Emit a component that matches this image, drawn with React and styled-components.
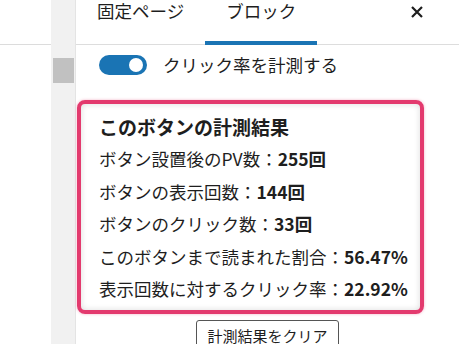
import React from "react";
import styled, { createGlobalStyle } from "styled-components";

const Global = createGlobalStyle`
  html, body { margin: 0; padding: 0; background: #fff; }
  body { font-family: "Noto Sans CJK JP", "Noto Sans", sans-serif; color: #1e1e1e; }
  * { box-sizing: border-box; }
`;

const Page = styled.div`
  display: flex;
  width: 459px;
  height: 344px;
  overflow: hidden;
`;

const LeftPane = styled.div`
  width: 51px;
  flex: none;
`;

const LeftHeader = styled.div`
  height: 45px;
  border-bottom: 1px solid #dcdcdc;
`;

const ScrollTrack = styled.div`
  width: 25px;
  flex: none;
  background: #f1f1f1;
  border-right: 1px solid #e4e4e4;
  padding: 58px 2px 0 2px;
`;

const ScrollThumb = styled.div`
  width: 21px;
  height: 25px;
  background: #c1c1c1;
`;

const Sidebar = styled.div`
  flex: 1;
  display: flex;
  flex-direction: column;
  min-width: 0;
  & > * { flex: none; }
`;

const TabBar = styled.div`
  display: flex;
  align-items: stretch;
  height: 45px;
  border-bottom: 1px solid #dddddd;
`;

const Tab = styled.div`
  padding: 0 21px;
  font-size: 17.5px;
  line-height: 21px;
  color: #1e1e1e;
  border-bottom: 4px solid ${(p) => (p.$active ? "#1a74b4" : "transparent")};
  margin-bottom: -1px;
  display: flex;
  align-items: flex-start;
`;

const Spacer = styled.div`
  flex: 1;
`;

const CloseButton = styled.div`
  width: 12px;
  margin: 6px 36px 0 0;
  height: 12px;
  display: flex;
`;

const Content = styled.div`
  display: flex;
  flex-direction: column;
  & > * { flex: none; }
`;

const ToggleRow = styled.div`
  display: flex;
  gap: 16px;
  padding: 9px 0 0 23px;
  height: 55px;
  align-items: flex-start;
`;

const Track = styled.div`
  width: 48px;
  height: 20px;
  border-radius: 10px;
  background: #1a74b4;
  display: flex;
  align-items: center;
  justify-content: flex-end;
  padding-right: 4px;
  margin-top: 1px;
`;

const Knob = styled.div`
  width: 14px;
  height: 14px;
  border-radius: 50%;
  background: #fff;
`;

const ToggleLabel = styled.div`
  font-size: 17.5px;
  line-height: 22px;
`;

const Card = styled.div`
  margin-left: 1px;
  width: 347px;
  border: 4px solid #e33a6e;
  border-radius: 8px;
  box-shadow: inset 0 0 6px rgba(0, 0, 0, 0.14), 0 0 3px rgba(227, 58, 110, 0.4);
  padding: 7px 10px 4px 18px;
`;

const CardTitle = styled.div`
  font-size: 19px;
  font-weight: 700;
  line-height: 32px;
`;

const StatLine = styled.div`
  font-size: 17.5px;
  line-height: 32.5px;
  white-space: nowrap;
`;

const Value = styled.b`
  font-weight: 700;
`;

const ButtonRow = styled.div`
  display: flex;
  justify-content: center;
  padding: 6px 0 0 0;
`;

const ClearButton = styled.button`
  font-family: inherit;
  font-size: 15px;
  line-height: 28px;
  height: 32px;
  padding: 1px 10px 0;
  background: #fff;
  color: #1e1e1e;
  border: 1px solid #555;
  border-radius: 3px;
`;

const stats = [
  ["ボタン設置後のPV数：", "255回"],
  ["ボタンの表示回数：", "144回"],
  ["ボタンのクリック数：", "33回"],
  ["このボタンまで読まれた割合：", "56.47%"],
  ["表示回数に対するクリック率：", "22.92%"],
];

export default function App() {
  return (
    <>
      <Global />
      <Page>
        <LeftPane>
          <LeftHeader />
        </LeftPane>
        <ScrollTrack>
          <ScrollThumb />
        </ScrollTrack>
        <Sidebar>
          <TabBar>
            <Tab>固定ページ</Tab>
            <Tab $active>ブロック</Tab>
            <Spacer />
            <CloseButton>
              <svg width="12" height="12" viewBox="0 0 12 12">
                <path d="M1 1L11 11M11 1L1 11" stroke="#1e1e1e" strokeWidth="2.2" />
              </svg>
            </CloseButton>
          </TabBar>
          <Content>
            <ToggleRow>
              <Track>
                <Knob />
              </Track>
              <ToggleLabel>クリック率を計測する</ToggleLabel>
            </ToggleRow>
            <Card>
              <CardTitle>このボタンの計測結果</CardTitle>
              {stats.map(([label, value]) => (
                <StatLine key={label}>
                  {label}
                  <Value>{value}</Value>
                </StatLine>
              ))}
            </Card>
            <ButtonRow>
              <ClearButton>計測結果をクリア</ClearButton>
            </ButtonRow>
          </Content>
        </Sidebar>
      </Page>
    </>
  );
}
